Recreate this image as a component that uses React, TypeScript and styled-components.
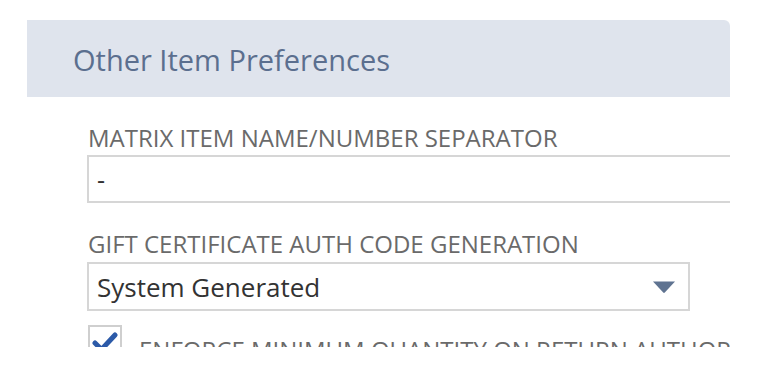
import React from 'react';
import styled, { createGlobalStyle } from 'styled-components';

const GlobalStyle = createGlobalStyle`
  html, body {
    margin: 0;
    padding: 0;
    background: #ffffff;
  }
  body {
    font-family: "Open Sans", "Liberation Sans", sans-serif;
  }
`;

const Page = styled.div`
  width: 774px;
  height: 376px;
  padding: 20px 0 0 27px;
  box-sizing: border-box;
`;

const Panel = styled.section`
  width: 703px;
  height: 327px;
  overflow: hidden;
`;

const Header = styled.div`
  height: 77px;
  display: flex;
  align-items: center;
  padding-left: 46px;
  background: #dfe4ed;
  border-radius: 0 6px 0 0;
`;

const Title = styled.h2`
  margin: 0;
  font-size: 29px;
  font-weight: 400;
  line-height: 77px;
  padding-top: 2px;
  color: #5b6f8f;
`;

const Body = styled.div`
  padding: 25px 0 0 60px;
  display: flex;
  flex-direction: column;
`;

const Field = styled.div<{ $gap?: number }>`
  display: flex;
  flex-direction: column;
  margin-bottom: ${p => p.$gap ?? 0}px;
`;

const Label = styled.label`
  font-size: 24px;
  line-height: 32px;
  color: #6a6a6a;
  margin-left: 1px;
  white-space: nowrap;
`;

const TextInput = styled.div`
  margin-top: 1px;
  height: 48px;
  width: 700px;
  box-sizing: border-box;
  border: 2px solid #d6d6d6;
  display: flex;
  align-items: center;
  padding-left: 8px;
  font-size: 25px;
  color: #333333;
`;

const Select = styled.div`
  margin-top: 2px;
  height: 49px;
  width: 603px;
  box-sizing: border-box;
  border: 2px solid #d6d6d6;
  display: flex;
  align-items: center;
  justify-content: space-between;
  padding: 0 12px 0 8px;
  font-size: 26px;
  color: #333333;
`;

const Arrow = styled.svg`
  width: 24px;
  height: 14px;
  display: block;
`;

const CheckRow = styled.div`
  display: flex;
  align-items: flex-start;
  gap: 17px;
  margin-top: 14px;
  margin-left: 1px;
`;

const Box = styled.div`
  width: 34px;
  height: 34px;
  box-sizing: border-box;
  border: 2px solid #cfcfcf;
  background: #ffffff;
  display: flex;
  align-items: center;
  justify-content: center;
  flex-shrink: 0;
`;

const CheckText = styled.span`
  font-size: 24px;
  line-height: 32px;
  margin-top: 9px;
  color: #6a6a6a;
  white-space: nowrap;
`;

export default function App() {
  return (
    <>
      <GlobalStyle />
      <Page>
        <Panel>
          <Header>
            <Title>Other Item Preferences</Title>
          </Header>
          <Body>
            <Field $gap={25}>
              <Label>MATRIX ITEM NAME/NUMBER SEPARATOR</Label>
              <TextInput>-</TextInput>
            </Field>
            <Field>
              <Label>GIFT CERTIFICATE AUTH CODE GENERATION</Label>
              <Select>
                <span>System Generated</span>
                <Arrow viewBox="0 0 24 14">
                  <path d="M1 1.5 L23 1.5 L12.8 12.6 Q12 13.4 11.2 12.6 Z" fill="#5f7391" />
                </Arrow>
              </Select>
            </Field>
            <CheckRow>
              <Box>
                <svg width="26" height="22" viewBox="0 0 26 22">
                  <path d="M3 12 L9.5 18.5 L23 4" fill="none" stroke="#2c5aa8" strokeWidth="5" strokeLinecap="round" strokeLinejoin="round" />
                </svg>
              </Box>
              <CheckText>ENFORCE MINIMUM QUANTITY ON RETURN AUTHORIZATION</CheckText>
            </CheckRow>
          </Body>
        </Panel>
      </Page>
    </>
  );
}
